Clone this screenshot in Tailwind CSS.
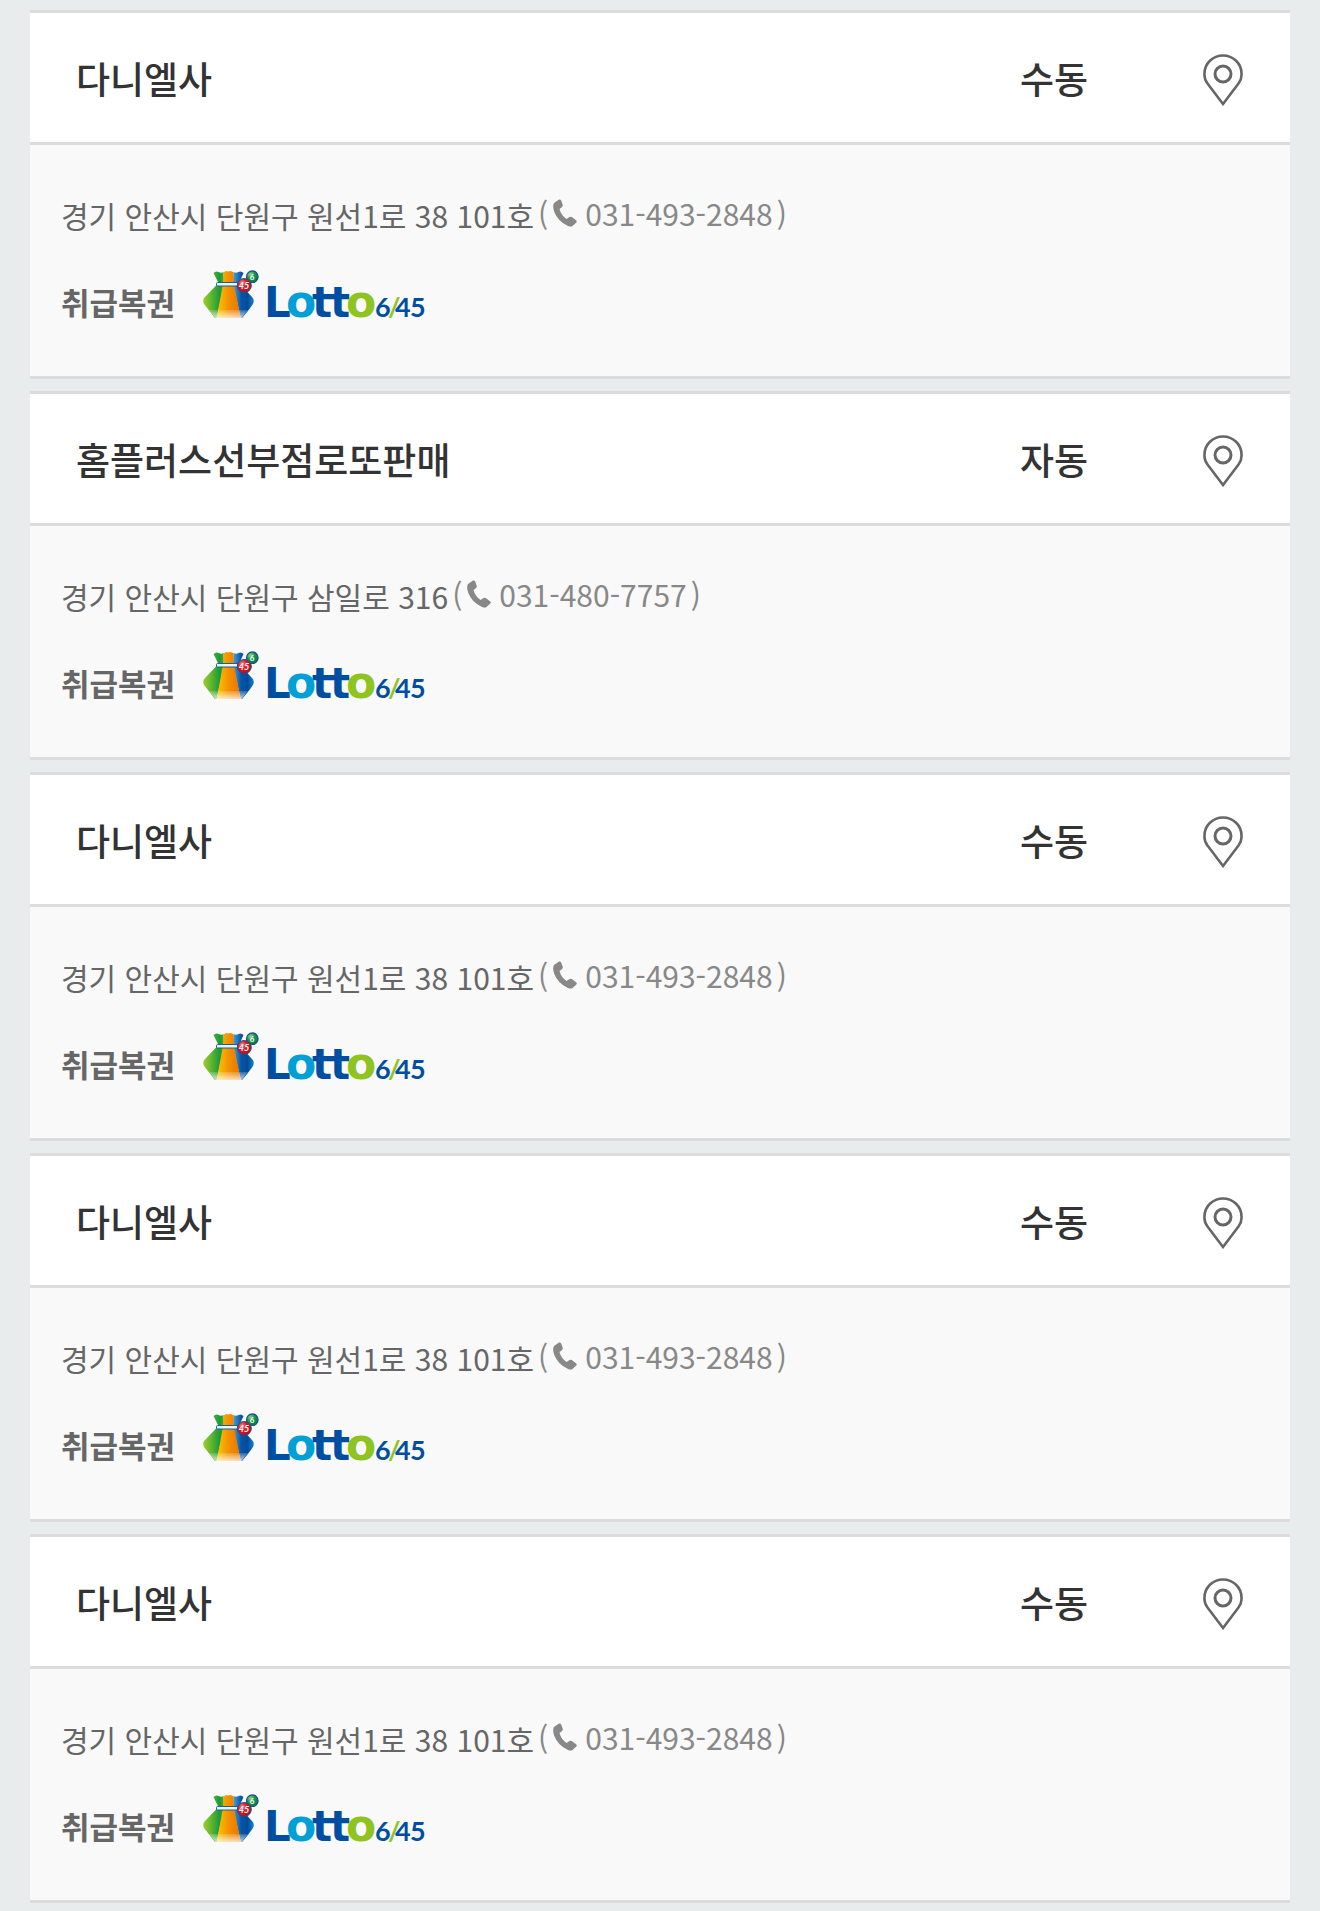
<!DOCTYPE html>
<html lang="ko">
<head>
<meta charset="utf-8">
<meta name="viewport" content="width=device-width, initial-scale=1">
<title>로또 판매점</title>
<script src="https://cdn.jsdelivr.net/npm/@tailwindcss/browser@4"></script>
</head>
<body class="bg-[#e8eced] font-['Noto_Sans_CJK_KR',sans-serif] text-[#666]">
<svg class="absolute h-0 w-0" aria-hidden="true">
  <defs>
    <linearGradient id="bagGreen" x1="0" y1="0" x2="1" y2="0"><stop offset="0" stop-color="#a5cb2c"/><stop offset=".35" stop-color="#67b82f"/><stop offset=".8" stop-color="#1a9a3c"/><stop offset="1" stop-color="#45ad38"/></linearGradient>
    <linearGradient id="bagOrange" x1="0" y1="0" x2="1" y2="0"><stop offset="0" stop-color="#fcc800"/><stop offset=".5" stop-color="#f39000"/><stop offset="1" stop-color="#e87400"/></linearGradient>
    <linearGradient id="bagBlue" x1="0" y1="0" x2="1" y2="0"><stop offset="0" stop-color="#45a4dd"/><stop offset=".4" stop-color="#0754a5"/><stop offset=".7" stop-color="#004b9c"/><stop offset="1" stop-color="#1683cb"/></linearGradient>
    <linearGradient id="bagShine" x1="0" y1="0" x2="0" y2="1"><stop offset="0" stop-color="#fff" stop-opacity=".15"/><stop offset="1" stop-color="#fff" stop-opacity=".75"/></linearGradient>
    <radialGradient id="ballRed" cx=".35" cy=".3" r=".75"><stop offset="0" stop-color="#f58a80"/><stop offset=".4" stop-color="#e01825"/><stop offset="1" stop-color="#b80d1b"/></radialGradient>
    <radialGradient id="ballGreen" cx=".35" cy=".3" r=".75"><stop offset="0" stop-color="#93cf8b"/><stop offset=".5" stop-color="#12964a"/><stop offset="1" stop-color="#007c3b"/></radialGradient>
  </defs>
  <symbol id="bag" viewBox="0 0 60 52">
    <path d="M13.500 5q2.500-2.500 5-1 2.500 1.500 5 0L24 16 16.700 50H15Q8 41 4 36 2 32 5 29L18.500 15Z" fill="url(#bagGreen)"/>
    <path d="M43.500 5q-2.500-2.500-5-1-2.500 1.500-5 0L33 16l7.700 34H42Q49 42 53 36q2-4-1-7L39 15Z" fill="url(#bagBlue)"/>
    <path d="M23.500 4.500q2.500-2.500 5-1 2.500-1.500 5 1L34 16l6.700 34h-24L23 16Z" fill="url(#bagOrange)"/>
    <path d="M9 42H48L41.500 50H15.500Z" fill="url(#bagShine)"/>
    <rect x="16.500" y="14.500" width="24" height="3.500" rx="1" fill="#e9f5fb" stroke="#17609a"/>
    <circle cx="52.300" cy="8.700" r="5.800" fill="url(#ballGreen)" stroke="#16518b" stroke-width="1.200"/>
    <circle cx="44.300" cy="17.500" r="7" fill="url(#ballRed)" stroke="#16518b"/>
  </symbol>
  <symbol id="pin" viewBox="0 0 40 52">
    <path d="M20 50 4.500 29.500Q1 25 1.500 19.500A18.500 18 0 0 1 38.500 19.500Q39 25 35.500 29.500Z" fill="none" stroke="#666" stroke-width="2.600"/>
    <circle cx="20" cy="20" r="8" fill="none" stroke="#666" stroke-width="3"/>
  </symbol>
  <symbol id="phone" viewBox="0 0 24 28">
    <path d="M1 4 6 .5Q7.500 0 8.200 1.500L9.800 6Q10 7.500 8.500 8.500L6.500 10Q8 16 13.500 20L16.500 18Q17.500 17.300 18.800 18L23.300 21.500Q24.300 22.500 23.300 23.500L19.500 27Q18 28 15 27 5 22.500 1.300 13-.8 7 1 4Z" fill="#888"/>
  </symbol>
</svg>
<main class="px-[30px] py-[10px]">
  <ul class="flex flex-col gap-3">
    <li class="border-y-[3px] border-[#dcdcdc] bg-[#f9f9f9]">
      <div class="flex h-[132px] items-center border-b-[3px] border-[#dcdcdc] bg-white pt-[2px] pr-[47px] pl-[46px] text-[37px] font-medium text-[#333]">
        <h2 class="flex-1">다니엘사</h2><span class="w-[183px]">수동</span>
        <button type="button" aria-label="지도 보기"><svg class="mt-[2px] h-[52px] w-10"><use href="#pin"/></svg></button>
      </div>
      <div class="flex h-[231px] flex-col gap-[29px] px-[31px] pt-[46px]">
        <p class="flex h-12 items-center text-[30px]">경기 안산시 단원구 원선1로 38 101호<a href="tel:031-493-2848" class="ml-1 flex items-center pb-1 text-[#888]">(<svg class="mr-2 ml-[5px] h-7 w-6" aria-hidden="true"><use href="#phone"/></svg>031-493-2848<span class="ml-1">)</span></a></p>
        <div class="flex items-start gap-[25px]"><strong class="pt-2 text-[31px] leading-[52px] font-bold">취급복권</strong>
          <svg class="h-[52px] w-[228px]" role="img" aria-label="Lotto 6/45" viewBox="0 0 228 52">
            <use href="#bag" width="60" height="52"/>
            <g fill="#fff" class="font-[Lato] font-bold" text-anchor="middle"><text x="44" y="21" font-size="9" font-style="italic">45</text><text x="52" y="12" font-size="8">6</text></g>
            <g class="font-['DejaVu_Sans'] font-bold" font-size="42"><text y="49" fill="#004ea2" x="64">L</text><text y="49" fill="#004ea2" x="112 130">tt</text><text y="49" fill="#00a0d7" font-size="44" x="86">o</text><text y="49" fill="#8fc31f" font-size="44" x="146">o</text></g>
            <g class="font-[Lato] font-bold" font-size="27" fill="#004ea2"><text y="49" x="175 188 195 210">6<tspan fill="#8fc31f">/</tspan>45</text></g>
          </svg></div>
      </div>
    </li>
    <li class="border-y-[3px] border-[#dcdcdc] bg-[#f9f9f9]">
      <div class="flex h-[132px] items-center border-b-[3px] border-[#dcdcdc] bg-white pt-[2px] pr-[47px] pl-[46px] text-[37px] font-medium text-[#333]">
        <h2 class="flex-1">홈플러스선부점로또판매</h2><span class="w-[183px]">자동</span>
        <button type="button" aria-label="지도 보기"><svg class="mt-[2px] h-[52px] w-10"><use href="#pin"/></svg></button>
      </div>
      <div class="flex h-[231px] flex-col gap-[29px] px-[31px] pt-[46px]">
        <p class="flex h-12 items-center text-[30px]">경기 안산시 단원구 삼일로 316<a href="tel:031-480-7757" class="ml-1 flex items-center pb-1 text-[#888]">(<svg class="mr-2 ml-[5px] h-7 w-6" aria-hidden="true"><use href="#phone"/></svg>031-480-7757<span class="ml-1">)</span></a></p>
        <div class="flex items-start gap-[25px]"><strong class="pt-2 text-[31px] leading-[52px] font-bold">취급복권</strong>
          <svg class="h-[52px] w-[228px]" role="img" aria-label="Lotto 6/45" viewBox="0 0 228 52">
            <use href="#bag" width="60" height="52"/>
            <g fill="#fff" class="font-[Lato] font-bold" text-anchor="middle"><text x="44" y="21" font-size="9" font-style="italic">45</text><text x="52" y="12" font-size="8">6</text></g>
            <g class="font-['DejaVu_Sans'] font-bold" font-size="42"><text y="49" fill="#004ea2" x="64">L</text><text y="49" fill="#004ea2" x="112 130">tt</text><text y="49" fill="#00a0d7" font-size="44" x="86">o</text><text y="49" fill="#8fc31f" font-size="44" x="146">o</text></g>
            <g class="font-[Lato] font-bold" font-size="27" fill="#004ea2"><text y="49" x="175 188 195 210">6<tspan fill="#8fc31f">/</tspan>45</text></g>
          </svg></div>
      </div>
    </li>
    <li class="border-y-[3px] border-[#dcdcdc] bg-[#f9f9f9]">
      <div class="flex h-[132px] items-center border-b-[3px] border-[#dcdcdc] bg-white pt-[2px] pr-[47px] pl-[46px] text-[37px] font-medium text-[#333]">
        <h2 class="flex-1">다니엘사</h2><span class="w-[183px]">수동</span>
        <button type="button" aria-label="지도 보기"><svg class="mt-[2px] h-[52px] w-10"><use href="#pin"/></svg></button>
      </div>
      <div class="flex h-[231px] flex-col gap-[29px] px-[31px] pt-[46px]">
        <p class="flex h-12 items-center text-[30px]">경기 안산시 단원구 원선1로 38 101호<a href="tel:031-493-2848" class="ml-1 flex items-center pb-1 text-[#888]">(<svg class="mr-2 ml-[5px] h-7 w-6" aria-hidden="true"><use href="#phone"/></svg>031-493-2848<span class="ml-1">)</span></a></p>
        <div class="flex items-start gap-[25px]"><strong class="pt-2 text-[31px] leading-[52px] font-bold">취급복권</strong>
          <svg class="h-[52px] w-[228px]" role="img" aria-label="Lotto 6/45" viewBox="0 0 228 52">
            <use href="#bag" width="60" height="52"/>
            <g fill="#fff" class="font-[Lato] font-bold" text-anchor="middle"><text x="44" y="21" font-size="9" font-style="italic">45</text><text x="52" y="12" font-size="8">6</text></g>
            <g class="font-['DejaVu_Sans'] font-bold" font-size="42"><text y="49" fill="#004ea2" x="64">L</text><text y="49" fill="#004ea2" x="112 130">tt</text><text y="49" fill="#00a0d7" font-size="44" x="86">o</text><text y="49" fill="#8fc31f" font-size="44" x="146">o</text></g>
            <g class="font-[Lato] font-bold" font-size="27" fill="#004ea2"><text y="49" x="175 188 195 210">6<tspan fill="#8fc31f">/</tspan>45</text></g>
          </svg></div>
      </div>
    </li>
    <li class="border-y-[3px] border-[#dcdcdc] bg-[#f9f9f9]">
      <div class="flex h-[132px] items-center border-b-[3px] border-[#dcdcdc] bg-white pt-[2px] pr-[47px] pl-[46px] text-[37px] font-medium text-[#333]">
        <h2 class="flex-1">다니엘사</h2><span class="w-[183px]">수동</span>
        <button type="button" aria-label="지도 보기"><svg class="mt-[2px] h-[52px] w-10"><use href="#pin"/></svg></button>
      </div>
      <div class="flex h-[231px] flex-col gap-[29px] px-[31px] pt-[46px]">
        <p class="flex h-12 items-center text-[30px]">경기 안산시 단원구 원선1로 38 101호<a href="tel:031-493-2848" class="ml-1 flex items-center pb-1 text-[#888]">(<svg class="mr-2 ml-[5px] h-7 w-6" aria-hidden="true"><use href="#phone"/></svg>031-493-2848<span class="ml-1">)</span></a></p>
        <div class="flex items-start gap-[25px]"><strong class="pt-2 text-[31px] leading-[52px] font-bold">취급복권</strong>
          <svg class="h-[52px] w-[228px]" role="img" aria-label="Lotto 6/45" viewBox="0 0 228 52">
            <use href="#bag" width="60" height="52"/>
            <g fill="#fff" class="font-[Lato] font-bold" text-anchor="middle"><text x="44" y="21" font-size="9" font-style="italic">45</text><text x="52" y="12" font-size="8">6</text></g>
            <g class="font-['DejaVu_Sans'] font-bold" font-size="42"><text y="49" fill="#004ea2" x="64">L</text><text y="49" fill="#004ea2" x="112 130">tt</text><text y="49" fill="#00a0d7" font-size="44" x="86">o</text><text y="49" fill="#8fc31f" font-size="44" x="146">o</text></g>
            <g class="font-[Lato] font-bold" font-size="27" fill="#004ea2"><text y="49" x="175 188 195 210">6<tspan fill="#8fc31f">/</tspan>45</text></g>
          </svg></div>
      </div>
    </li>
    <li class="border-y-[3px] border-[#dcdcdc] bg-[#f9f9f9]">
      <div class="flex h-[132px] items-center border-b-[3px] border-[#dcdcdc] bg-white pt-[2px] pr-[47px] pl-[46px] text-[37px] font-medium text-[#333]">
        <h2 class="flex-1">다니엘사</h2><span class="w-[183px]">수동</span>
        <button type="button" aria-label="지도 보기"><svg class="mt-[2px] h-[52px] w-10"><use href="#pin"/></svg></button>
      </div>
      <div class="flex h-[231px] flex-col gap-[29px] px-[31px] pt-[46px]">
        <p class="flex h-12 items-center text-[30px]">경기 안산시 단원구 원선1로 38 101호<a href="tel:031-493-2848" class="ml-1 flex items-center pb-1 text-[#888]">(<svg class="mr-2 ml-[5px] h-7 w-6" aria-hidden="true"><use href="#phone"/></svg>031-493-2848<span class="ml-1">)</span></a></p>
        <div class="flex items-start gap-[25px]"><strong class="pt-2 text-[31px] leading-[52px] font-bold">취급복권</strong>
          <svg class="h-[52px] w-[228px]" role="img" aria-label="Lotto 6/45" viewBox="0 0 228 52">
            <use href="#bag" width="60" height="52"/>
            <g fill="#fff" class="font-[Lato] font-bold" text-anchor="middle"><text x="44" y="21" font-size="9" font-style="italic">45</text><text x="52" y="12" font-size="8">6</text></g>
            <g class="font-['DejaVu_Sans'] font-bold" font-size="42"><text y="49" fill="#004ea2" x="64">L</text><text y="49" fill="#004ea2" x="112 130">tt</text><text y="49" fill="#00a0d7" font-size="44" x="86">o</text><text y="49" fill="#8fc31f" font-size="44" x="146">o</text></g>
            <g class="font-[Lato] font-bold" font-size="27" fill="#004ea2"><text y="49" x="175 188 195 210">6<tspan fill="#8fc31f">/</tspan>45</text></g>
          </svg></div>
      </div>
    </li>
  </ul>
</main>
</body>
</html>
